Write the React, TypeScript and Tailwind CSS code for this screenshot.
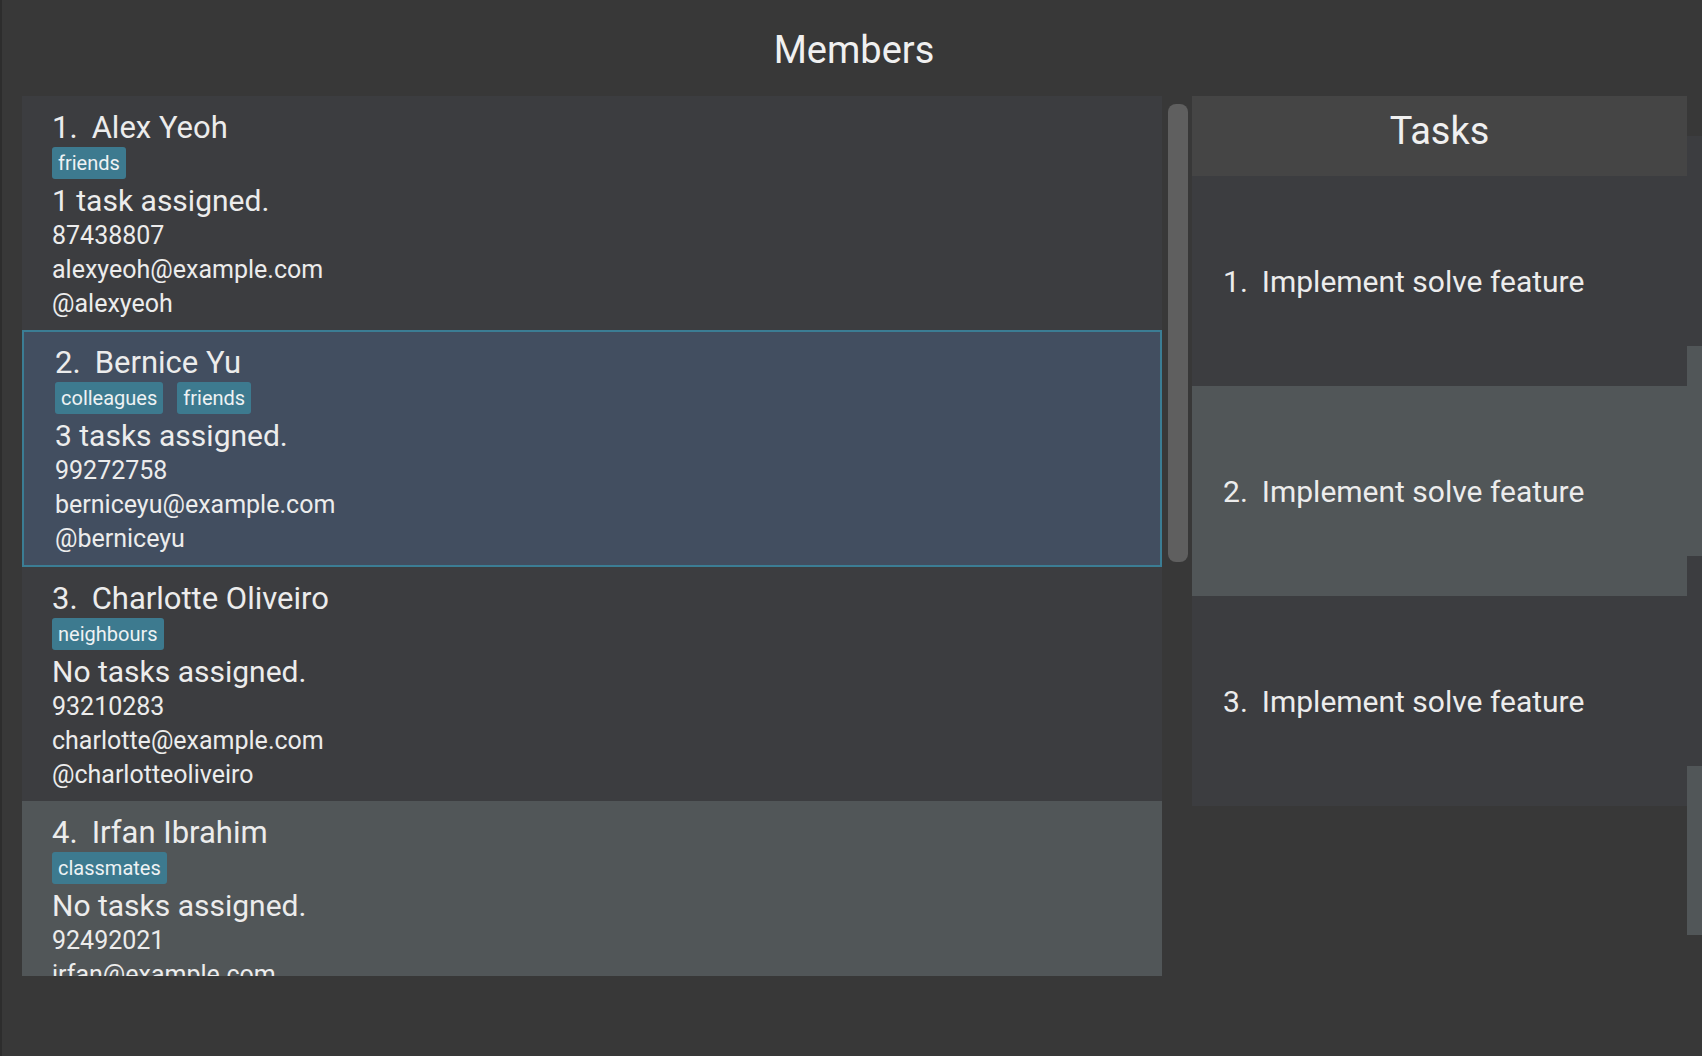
import React from 'react';

type Member = {
  name: string;
  tags: string[];
  tasks: string;
  phone: string;
  email: string;
  handle: string;
};

const members: Member[] = [
  { name: 'Alex Yeoh', tags: ['friends'], tasks: '1 task assigned.', phone: '87438807', email: 'alexyeoh@example.com', handle: '@alexyeoh' },
  { name: 'Bernice Yu', tags: ['colleagues', 'friends'], tasks: '3 tasks assigned.', phone: '99272758', email: 'berniceyu@example.com', handle: '@berniceyu' },
  { name: 'Charlotte Oliveiro', tags: ['neighbours'], tasks: 'No tasks assigned.', phone: '93210283', email: 'charlotte@example.com', handle: '@charlotteoliveiro' },
  { name: 'Irfan Ibrahim', tags: ['classmates'], tasks: 'No tasks assigned.', phone: '92492021', email: 'irfan@example.com', handle: '@irfanibrahim' },
];

const tasks = ['Implement solve feature', 'Implement solve feature', 'Implement solve feature'];

const MemberCard: React.FC<{ m: Member; index: number; selected: boolean }> = ({ m, index, selected }) => {
  const bg = selected
    ? 'h-[237px] bg-[#424e60] border-2 border-[#3b7d94] pl-[31px] pt-[13px]'
    : index % 2 === 0
      ? 'h-[234px] bg-[#3c3d40] pl-[30px] pt-[14px]'
      : 'h-[235px] bg-[#515658] pl-[30px] pt-[14px]';
  return (
    <div className={`shrink-0 overflow-hidden flex flex-col text-[#ececec] ${bg}`}>
      <div className="h-[36px] leading-[36px] text-[31px] whitespace-nowrap">
        {index + 1}.<span className="ml-[14px]">{m.name}</span>
      </div>
      <div className="flex gap-[14px] mt-[1px]">
        {m.tags.map((t) => (
          <span key={t} className="h-[32px] leading-[32px] px-[6px] rounded-[3px] bg-[#3d7a8f] text-[20px] text-[#eef2f4]">
            {t}
          </span>
        ))}
      </div>
      <div className="h-[34px] leading-[34px] text-[30px] mt-[5px] whitespace-nowrap">{m.tasks}</div>
      <div className="h-[34px] leading-[34px] text-[25px] mt-[1px]">{m.phone}</div>
      <div className="h-[34px] leading-[34px] text-[25px]">{m.email}</div>
      <div className="h-[34px] leading-[34px] text-[25px]">{m.handle}</div>
    </div>
  );
};

export default function App() {
  return (
    <div
      className="w-[1702px] h-[1056px] bg-[#383838] border-l-2 border-[#2d2d2d] flex flex-col overflow-hidden"
      style={{ fontFamily: 'Roboto, "Liberation Sans", sans-serif' }}
    >
      <div className="h-[96px] shrink-0 flex justify-center pt-[28px]">
        <h1 className="text-[38px] leading-[44px] text-[#f0f0f0] ml-[4px]">Members</h1>
      </div>

      <div className="flex pl-[20px]">
        {/* member list */}
        <div className="w-[1140px] h-[880px] flex flex-col overflow-hidden">
          {members.map((m, i) => (
            <MemberCard key={m.name} m={m} index={i} selected={i === 1} />
          ))}
        </div>

        {/* scrollbar */}
        <div className="w-[30px] shrink-0">
          <div className="ml-[6px] mt-[8px] w-[20px] h-[458px] rounded-[8px] bg-[#5f5f5f]" />
        </div>

        {/* tasks */}
        <div className="w-[495px] shrink-0 flex flex-col">
          <div className="h-[80px] bg-[#454545] flex justify-center pt-[13px]">
            <span className="text-[38px] leading-[44px] text-[#f0f0f0]">Tasks</span>
          </div>
          {tasks.map((t, i) => (
            <div
              key={i}
              className={`h-[210px] flex items-center pl-[31px] text-[30px] text-[#ececec] ${i % 2 === 0 ? 'bg-[#3c3d40]' : 'bg-[#515658]'}`}
            >
              {i + 1}.<span className="ml-[14px]">{t}</span>
            </div>
          ))}
        </div>

        {/* edge of neighbouring list */}
        <div className="w-[15px] shrink-0 flex flex-col pt-[40px]">
          <div className="h-[210px] bg-[#3c3d40]" />
          <div className="h-[210px] bg-[#515658]" />
          <div className="h-[210px] bg-[#3c3d40]" />
          <div className="h-[169px] bg-[#515658]" />
        </div>
      </div>
    </div>
  );
}
